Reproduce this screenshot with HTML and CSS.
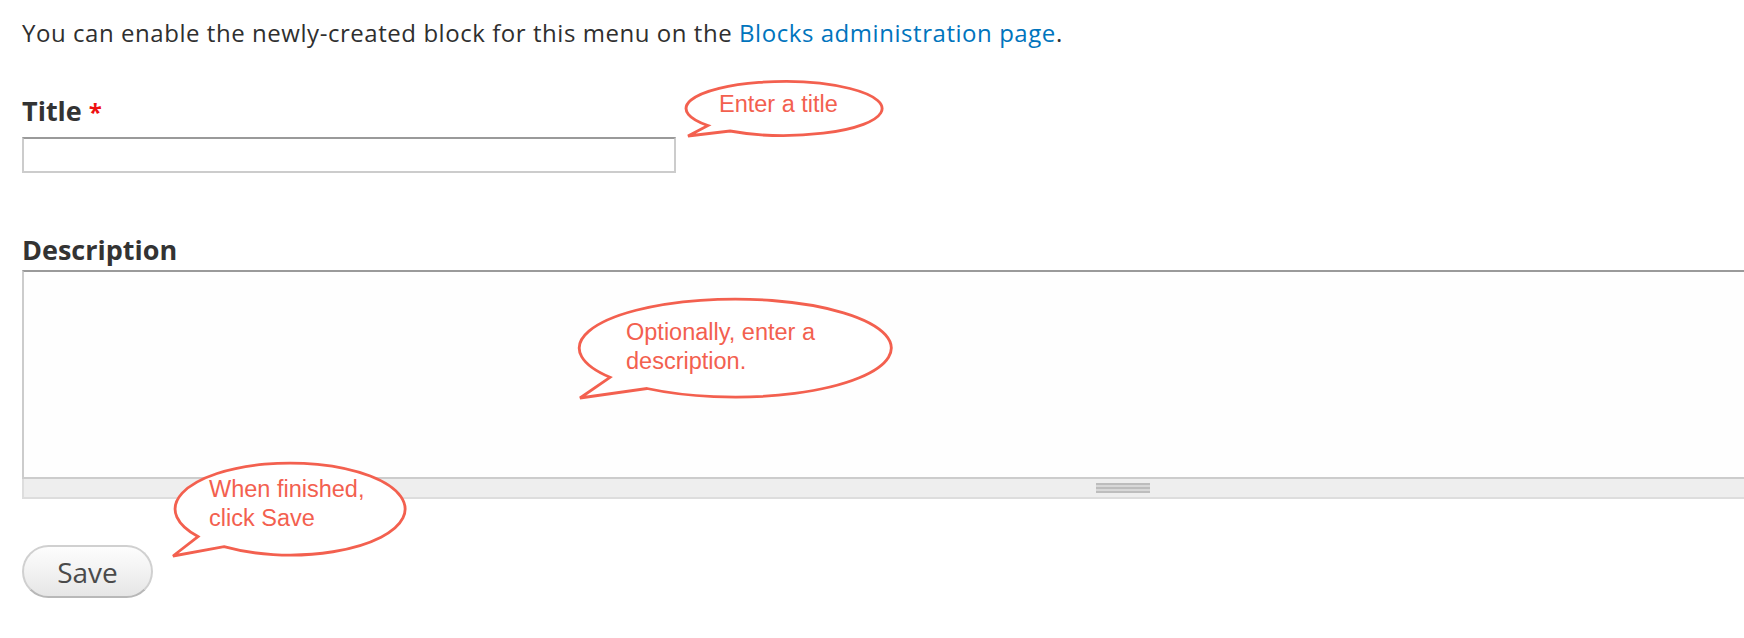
FILE: index.html
```html
<!DOCTYPE html>
<html lang="en">
<head>
<meta charset="utf-8">
<title>Menu block</title>
<link rel="stylesheet" href="styles.css">
</head>
<body>
<div class="page">
  <p class="intro">You can enable the newly-created block for this menu on the <a href="#" class="link">Blocks administration page</a>.</p>

  <div class="field field-title">
    <label class="label" for="title">Title <span class="req">*</span></label>
    <input class="text-input" id="title" type="text">
  </div>

  <div class="field field-desc">
    <label class="label" for="desc">Description</label>
    <div class="textarea-wrap">
      <textarea class="textarea" id="desc"></textarea>
      <div class="grippie"><span class="grip"></span></div>
    </div>
  </div>

  <div class="actions">
    <button class="btn" type="button">Save</button>
  </div>

  <svg class="callout callout-title" width="210" height="66" viewBox="0 0 210 66">
    <path class="bubble" d="M28,49.5 L8,60 L50,55 A98,27 0 1 0 28,49.5 Z"/>
    <text class="bubble-text" x="39" y="36">Enter a title</text>
  </svg>

  <svg class="callout callout-desc" width="328" height="112" viewBox="0 0 328 112">
    <path class="bubble" d="M38,85.3 L8,106 L75,96.5 A156,49 0 1 0 38,85.3 Z"/>
    <text class="bubble-text" x="54" y="48">Optionally, enter a</text>
    <text class="bubble-text" x="54" y="77">description.</text>
  </svg>

  <svg class="callout callout-save" width="246" height="106" viewBox="0 0 246 106">
    <path class="bubble" d="M32,80.6 L7,100 L58,90.7 A115,46 0 1 0 32,80.6 Z"/>
    <text class="bubble-text" x="43" y="41">When finished,</text>
    <text class="bubble-text" x="43" y="70">click Save</text>
  </svg>
</div>
</body>
</html>
```

FILE: styles.css
```css
html, body {
  margin: 0;
  padding: 0;
  background: #ffffff;
  overflow: hidden;
}

body {
  font-family: "Open Sans", "DejaVu Sans", sans-serif;
  color: #333333;
}

.page {
  position: relative;
  padding: 16px 0 0 22px;
  min-height: 622px;
}

.intro {
  margin: 0;
  font-size: 24px;
  line-height: 34px;
  letter-spacing: 0.55px;
  color: #2f2f2f;
  white-space: nowrap;
}

.link {
  color: #0074bd;
  text-decoration: none;
}

.field {
  display: flex;
  flex-direction: column;
  align-items: flex-start;
}

.label {
  display: block;
  font-size: 27px;
  line-height: 30px;
  font-weight: 700;
  color: #333333;
}

.req {
  color: #ee1111;
  font-size: 24px;
}

.field-title {
  margin-top: 46px;
}

.text-input {
  box-sizing: border-box;
  margin: 10px 0 0;
  width: 654px;
  height: 36px;
  border: 2px solid #cccccc;
  border-top-color: #9a9a9a;
  background: #ffffff;
  padding: 0 6px;
  border-radius: 0;
  outline: none;
}

.field-desc {
  margin-top: 62px;
}

.textarea-wrap {
  margin-top: 5px;
  width: 1740px;
  display: flex;
  flex-direction: column;
}

.textarea {
  box-sizing: border-box;
  display: block;
  width: 100%;
  height: 209px;
  margin: 0;
  border: 2px solid #cccccc;
  border-top-color: #9a9a9a;
  border-right: 0;
  background: #fefefe;
  resize: none;
  outline: none;
  font-family: inherit;
}

.grippie {
  box-sizing: border-box;
  height: 20px;
  background: #eeeeee;
  border: 2px solid #dddddd;
  border-top: 0;
  border-right: 0;
  display: flex;
  align-items: center;
  justify-content: flex-start;
  padding-left: 1072px;
}

.grip {
  display: block;
  width: 54px;
  height: 10px;
  background: repeating-linear-gradient(to bottom, #bdbdbd 0, #bdbdbd 2px, #d8d8d8 2px, #d8d8d8 4px);
}

.actions {
  margin-top: 46px;
}

.btn {
  box-sizing: border-box;
  width: 131px;
  height: 53px;
  border: 2px solid #d0d0d0;
  border-bottom-color: #b8b8b8;
  border-radius: 27px;
  background: linear-gradient(to bottom, #fdfdfd 0%, #f1f1f1 55%, #e6e6e6 100%);
  font-family: "Open Sans", "DejaVu Sans", sans-serif;
  font-size: 28px;
  color: #4a4a4a;
  padding: 0;
  cursor: pointer;
}

.callout {
  position: absolute;
  overflow: visible;
}

.callout-title {
  left: 680px;
  top: 76px;
}

.callout-desc {
  left: 572px;
  top: 292px;
}

.callout-save {
  left: 166px;
  top: 456px;
}

.bubble {
  fill: #ffffff;
  stroke: #f3604f;
  stroke-width: 2.8;
  stroke-linejoin: miter;
}

.bubble-text {
  font-family: "Liberation Sans", Arial, sans-serif;
  font-size: 23.5px;
  fill: #f3604f;
}
```
